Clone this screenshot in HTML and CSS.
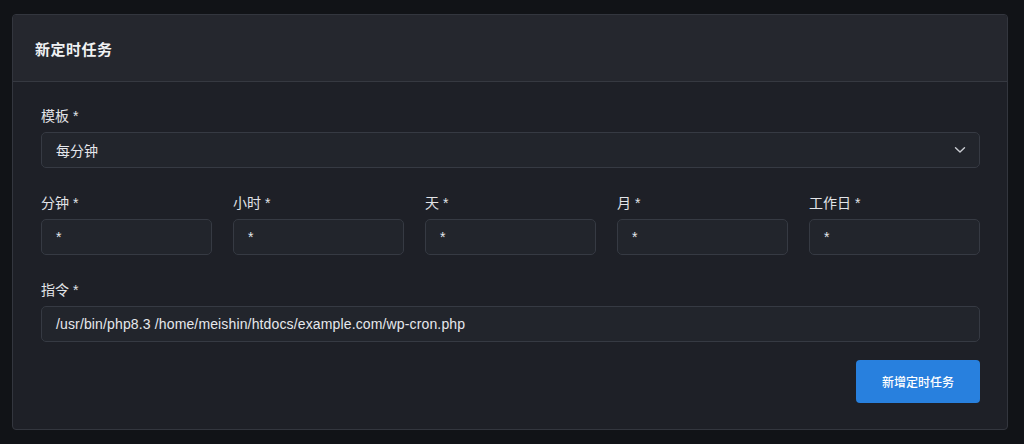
FILE: index.html
```html
<!DOCTYPE html>
<html lang="zh">
<head>
<meta charset="utf-8">
<title>新定时任务</title>
<link rel="stylesheet" href="styles.css">
</head>
<body>
<div class="page">
  <section class="card">
    <header class="card-header">
      <h2 class="card-title">新定时任务</h2>
    </header>
    <div class="card-body">
      <div class="field">
        <label class="label">模板 *</label>
        <div class="select">
          <span class="select-value">每分钟</span>
          <svg class="chevron" width="12" height="8" viewBox="0 0 12 8"><path d="M1.5 1.8 L6 6 L10.5 1.8" fill="none" stroke="#c9ccd2" stroke-width="1.4" stroke-linecap="round" stroke-linejoin="round"/></svg>
        </div>
      </div>
      <div class="field grid5">
        <div class="col">
          <label class="label">分钟 *</label>
          <div class="input">*</div>
        </div>
        <div class="col">
          <label class="label">小时 *</label>
          <div class="input">*</div>
        </div>
        <div class="col">
          <label class="label">天 *</label>
          <div class="input">*</div>
        </div>
        <div class="col">
          <label class="label">月 *</label>
          <div class="input">*</div>
        </div>
        <div class="col">
          <label class="label">工作日 *</label>
          <div class="input">*</div>
        </div>
      </div>
      <div class="field">
        <label class="label">指令 *</label>
        <div class="input input-cmd">/usr/bin/php8.3 /home/meishin/htdocs/example.com/wp-cron.php</div>
      </div>
      <div class="actions">
        <button class="btn">新增定时任务</button>
      </div>
    </div>
  </section>
</div>
</body>
</html>
```

FILE: styles.css
```css
* { box-sizing: border-box; }
html, body { margin: 0; padding: 0; }
body {
  background: #111317;
  font-family: "Liberation Sans", "Noto Sans CJK SC", sans-serif;
  color: #e4e6ea;
  width: 1024px;
  height: 444px;
  overflow: hidden;
}
.page {
  padding: 14px 16px 0 12px;
}
.card {
  width: 996px;
  background: #1e2027;
  border: 1px solid #33363e;
  border-radius: 4px;
  overflow: hidden;
}
.card-header {
  background: #25272e;
  height: 67px;
  border-bottom: 1px solid #363941;
  display: flex;
  align-items: center;
  padding: 0 22px;
}
.card-title {
  margin: 0;
  font-size: 15px;
  font-weight: 700;
  color: #f0f1f3;
  letter-spacing: 0.5px;
}
.card-body {
  padding: 24px 27px 26px 28px;
  display: flex;
  flex-direction: column;
  gap: 25px;
}
.field { display: flex; flex-direction: column; }
.label {
  font-size: 14px;
  line-height: 20px;
  color: #e2e4e8;
  margin-bottom: 6px;
}
.select, .input {
  height: 36px;
  background: #22252c;
  border: 1px solid #363a43;
  border-radius: 5px;
  display: flex;
  align-items: center;
  padding: 0 14px;
  font-size: 14px;
  color: #e6e8ec;
}
.input-cmd {
  letter-spacing: 0.14px;
}
.select { justify-content: space-between; padding-right: 13px; }
.chevron { display: block; }
.grid5 {
  display: grid;
  grid-template-columns: repeat(5, 1fr);
  column-gap: 21px;
  flex-direction: row;
}
.col { display: flex; flex-direction: column; }
.actions {
  display: flex;
  justify-content: flex-end;
  margin-top: -7px;
}
.btn {
  width: 124px;
  height: 43px;
  background: #2880de;
  border: none;
  border-radius: 4px;
  color: #ffffff;
  font-family: "Liberation Sans", "Noto Sans CJK SC", sans-serif;
  font-size: 12px;
  font-weight: 500;
}
```
